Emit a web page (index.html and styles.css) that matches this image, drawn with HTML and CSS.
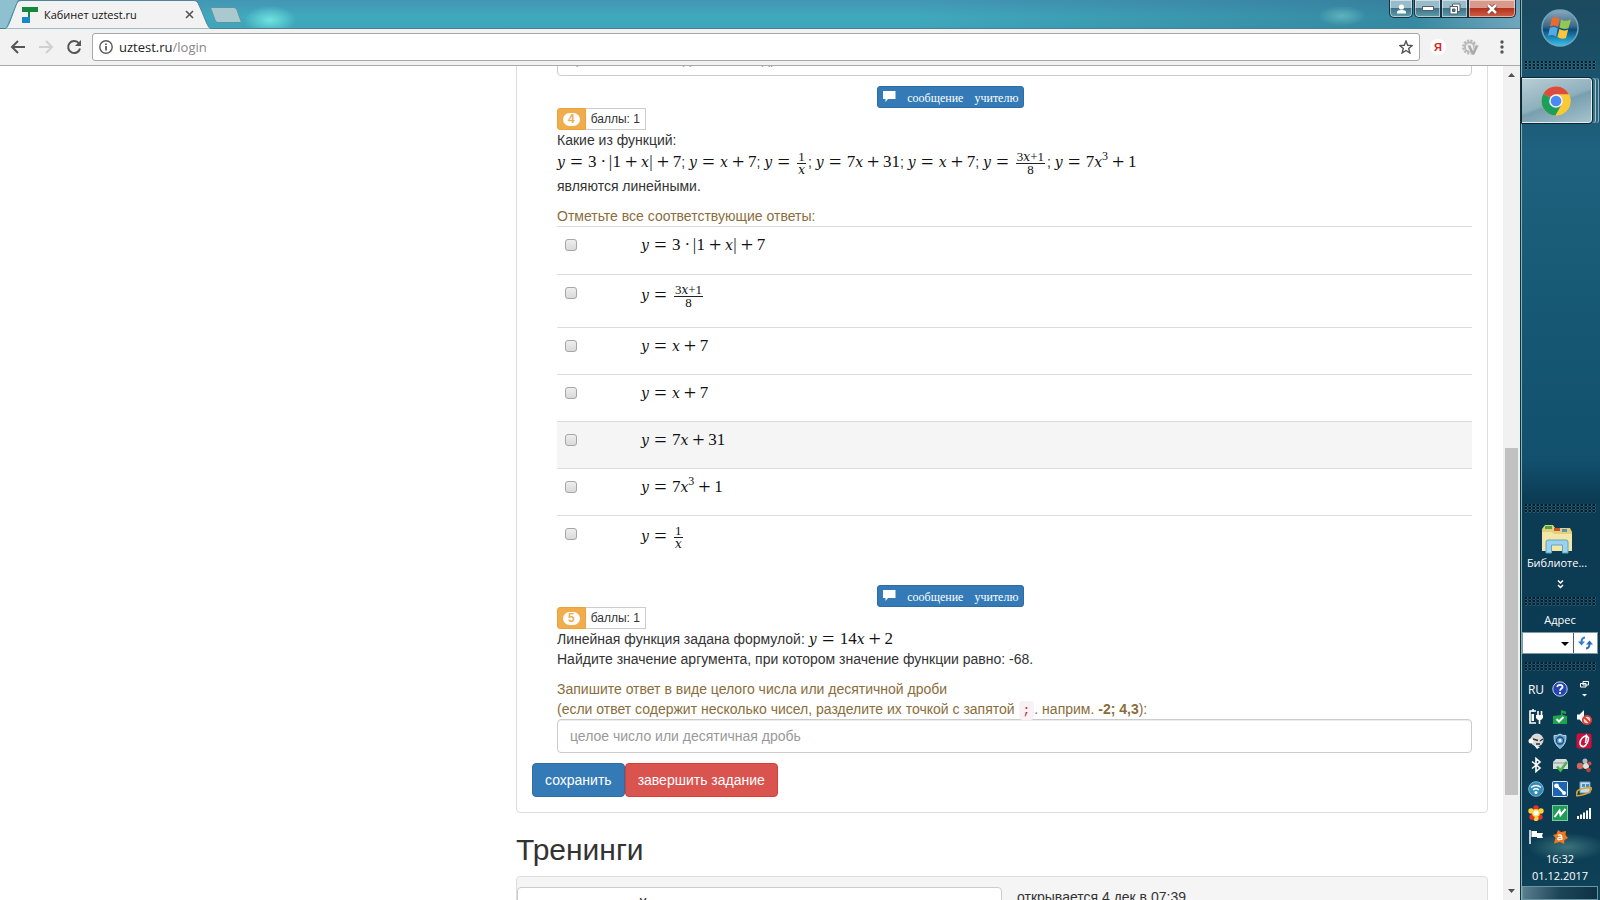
FILE: index.html
```html
<!DOCTYPE html>
<html lang="ru">
<head>
  <meta charset="UTF-8">
  <meta name="viewport" content="width=device-width, initial-scale=1.0">
  <title>Кабинет uztest.ru</title>
  <link rel="stylesheet" href="styles.css">
</head>
<body>
<div class="browser">
  <header class="titlebar">
    <div class="tab">
      <svg class="tab-shape" width="212" height="29" viewBox="0 0 212 29">
        <path d="M0 0H18L6 28H0Z" fill="#8fc0cf"/>
        <path d="M5 29C9 27 10 20 17 3Q18 .5 21 .5H194Q197 .5 198 3C206 20 207 27 211 29Z" fill="#f2f2f2" stroke="#4d8797"/>
      </svg>
      <svg class="favicon" width="16" height="16" viewBox="0 0 16 16">
        <path d="M0 0H16V5H8V16H0V10H6V5H0Z" fill="#14883f"/>
        <path d="M0 10H8V16H0Z" fill="#1689cb"/>
      </svg>
      <span class="tab-title">Кабинет uztest.ru</span>
      <button class="tab-close" aria-label="Закрыть вкладку">
        <svg width="9" height="9" viewBox="0 0 9 9"><path d="M1 1L8 8M8 1L1 8" stroke="#555" stroke-width="1.6"/></svg>
      </button>
    </div>
    <button class="new-tab" aria-label="Новая вкладка">
      <svg width="34" height="16" viewBox="0 0 34 16"><path d="M1.5 .5H25Q27 .5 28 3L32.5 15.5H9Q7 15.5 6 13Z" fill="#aac9ce" stroke="#5a95a3"/></svg>
    </button>
    <div class="window-buttons">
      <button class="win-btn win-user" aria-label="Пользователь">
        <svg width="11" height="10" viewBox="0 0 11 10"><circle cx="5.5" cy="3" r="2.6" fill="#fff"/><path d="M1 9.5V8Q1 6 5.5 6T10 8V9.5Z" fill="#fff"/></svg>
      </button>
      <button class="win-btn win-min" aria-label="Свернуть">
        <svg width="12" height="5" viewBox="0 0 12 5"><path d="M.5 .5H11.5V4.5H.5Z" fill="#fff" stroke="#52606b"/></svg>
      </button>
      <button class="win-btn win-restore" aria-label="Восстановить">
        <svg width="12" height="12" viewBox="0 0 12 12"><path d="M3.500 1H11V8.500H3.500Z" fill="#fff" stroke="#52606b"/><path d="M1 3.500H8.500V11H1Z" fill="#fff" stroke="#52606b"/><path d="M3.500 6H6V8.500H3.500Z" fill="#4b7b8e" stroke="#52606b"/></svg>
      </button>
      <button class="win-btn win-close" aria-label="Закрыть">
        <svg width="12" height="10" viewBox="0 0 12 10"><path d="M2 1L10 9M10 1L2 9" stroke="#6b2c2a" stroke-width="4"/><path d="M2 1L10 9M10 1L2 9" stroke="#fff" stroke-width="2.6"/></svg>
      </button>
    </div>
  </header>

  <nav class="toolbar">
    <button class="nav-btn" aria-label="Назад">
      <svg width="16" height="16" viewBox="0 0 16 16"><path d="M15 8H2M8 2L2 8L8 14" fill="none" stroke="#555" stroke-width="2"/></svg>
    </button>
    <button class="nav-btn" aria-label="Вперёд">
      <svg width="16" height="16" viewBox="0 0 16 16"><path d="M1 8H14M8 2L14 8L8 14" fill="none" stroke="#d0d0d0" stroke-width="2"/></svg>
    </button>
    <button class="nav-btn" aria-label="Обновить">
      <svg width="16" height="16" viewBox="0 0 16 16"><path d="M13 4.5A6 6 0 1 0 14 9.5" fill="none" stroke="#555" stroke-width="2"/><path d="M15 1V7H9Z" fill="#555"/></svg>
    </button>
    <form class="omnibox">
      <svg width="14" height="14" viewBox="0 0 14 14"><circle cx="7" cy="7" r="6.2" fill="none" stroke="#5a5a5a" stroke-width="1.4"/><path d="M7 6V10.5M7 3.5V5" stroke="#5a5a5a" stroke-width="1.8"/></svg>
      <label class="host" for="url">uztest.ru</label>
      <input class="url" id="url" type="text" value="/login">
      <svg width="14" height="14" viewBox="0 0 14 14"><path d="M7 1L8.7 5.3L13.2 5.6L9.7 8.5L10.9 13L7 10.5L3.1 13L4.3 8.5L.8 5.6L5.3 5.3Z" fill="none" stroke="#555" stroke-width="1.4"/></svg>
    </form>
    <button class="ext ext-ya" aria-label="Яндекс">Я</button>
    <button class="ext ext-gear" aria-label="Расширение">
      <svg width="17" height="17" viewBox="0 0 17 17"><circle cx="7.5" cy="8" r="6.3" fill="none" stroke="#b9b9b9" stroke-width="2.4" stroke-dasharray="2.2 1.1"/><circle cx="7.5" cy="8" r="4.6" fill="none" stroke="#b9b9b9" stroke-width="2"/><path d="M5 6H8.5L11 11.5L13.5 6H17L12.5 16H9.5Z" fill="#a9a9a9" stroke="#f2f2f2" stroke-width=".7"/></svg>
    </button>
    <button class="ext ext-menu" aria-label="Меню">
      <svg width="4" height="14" viewBox="0 0 4 14"><circle cx="2" cy="2" r="1.7" fill="#555"/><circle cx="2" cy="7" r="1.7" fill="#555"/><circle cx="2" cy="12" r="1.7" fill="#555"/></svg>
    </button>
  </nav>

  <div class="viewport">
    <div class="page">
      <main class="content">
        <section class="panel">
          <div class="question">
            <input class="answer" type="text" placeholder="целое число или десятичная дробь" aria-label="Ответ на задание 3">
          </div>

          <div class="question">
            <button class="message">
              <svg width="13" height="11" viewBox="0 0 13 11"><path d="M0 0H12.5V8H5L2.5 11V8H0Z" fill="#fff"/></svg>
              <span>сообщение</span><span>учителю</span>
            </button>
            <div class="score"><span class="num"><b>4</b></span><span class="points">баллы: 1</span></div>
            <p>Какие из функций:</p>
            <p class="formulas"><span class="math"><i>y</i><span class="rel">=</span>3<span class="dot">·</span><span class="bar">|</span>1<span class="bin">+</span><i>x</i><span class="bar">|</span><span class="bin">+</span>7</span>; <span class="math"><i>y</i><span class="rel">=</span><i>x</i><span class="bin">+</span>7</span>; <span class="math"><i>y</i><span class="rel">=</span><span class="frac"><span>1</span><span><i>x</i></span></span></span>; <span class="math"><i>y</i><span class="rel">=</span>7<i>x</i><span class="bin">+</span>31</span>; <span class="math"><i>y</i><span class="rel">=</span><i>x</i><span class="bin">+</span>7</span>; <span class="math"><i>y</i><span class="rel">=</span><span class="frac"><span>3<i>x</i>+1</span><span>8</span></span></span>; <span class="math"><i>y</i><span class="rel">=</span>7<i>x</i><sup>3</sup><span class="bin">+</span>1</span></p>
            <p>являются линейными.</p>
            <p class="hint">Отметьте все соответствующие ответы:</p>
            <table class="options">
              <tr>
                <td class="pick"><input type="checkbox" id="a1"></td>
                <td><label for="a1" class="math tall"><i>y</i><span class="rel">=</span>3<span class="dot">·</span><span class="bar">|</span>1<span class="bin">+</span><i>x</i><span class="bar">|</span><span class="bin">+</span>7</label></td>
              </tr>
              <tr>
                <td class="pick"><input type="checkbox" id="a2"></td>
                <td><label for="a2" class="math with-frac"><i>y</i><span class="rel">=</span><span class="frac"><span>3<i>x</i>+1</span><span>8</span></span></label></td>
              </tr>
              <tr>
                <td class="pick"><input type="checkbox" id="a3"></td>
                <td><label for="a3" class="math"><i>y</i><span class="rel">=</span><i>x</i><span class="bin">+</span>7</label></td>
              </tr>
              <tr>
                <td class="pick"><input type="checkbox" id="a4"></td>
                <td><label for="a4" class="math"><i>y</i><span class="rel">=</span><i>x</i><span class="bin">+</span>7</label></td>
              </tr>
              <tr class="active">
                <td class="pick"><input type="checkbox" id="a5"></td>
                <td><label for="a5" class="math"><i>y</i><span class="rel">=</span>7<i>x</i><span class="bin">+</span>31</label></td>
              </tr>
              <tr>
                <td class="pick"><input type="checkbox" id="a6"></td>
                <td><label for="a6" class="math"><i>y</i><span class="rel">=</span>7<i>x</i><sup>3</sup><span class="bin">+</span>1</label></td>
              </tr>
              <tr>
                <td class="pick"><input type="checkbox" id="a7"></td>
                <td><label for="a7" class="math with-frac"><i>y</i><span class="rel">=</span><span class="frac"><span>1</span><span><i>x</i></span></span></label></td>
              </tr>
            </table>
          </div>

          <div class="question">
            <button class="message">
              <svg width="13" height="11" viewBox="0 0 13 11"><path d="M0 0H12.5V8H5L2.5 11V8H0Z" fill="#fff"/></svg>
              <span>сообщение</span><span>учителю</span>
            </button>
            <div class="score"><span class="num"><b>5</b></span><span class="points">баллы: 1</span></div>
            <p>Линейная функция задана формулой: <span class="math"><i>y</i><span class="rel">=</span>14<i>x</i><span class="bin">+</span>2</span></p>
            <p>Найдите значение аргумента, при котором значение функции равно: -68.</p>
            <label class="hint" for="q5">Запишите ответ в виде целого числа или десятичной дроби<br>(если ответ содержит несколько чисел, разделите их точкой с запятой <code>;</code>. наприм. <b>-2; 4,3</b>):</label>
            <input class="answer" id="q5" type="text" placeholder="целое число или десятичная дробь">
          </div>

          <div class="actions">
            <button class="btn btn-primary">сохранить</button><button class="btn btn-danger">завершить задание</button>
          </div>
        </section>

        <h2>Тренинги</h2>
        <section class="trainings">
          <div class="training-name">й</div>
          <div class="training-date">открывается 4 дек в 07:39</div>
        </section>
      </main>
    </div>
    <div class="scrollbar">
      <svg width="7" height="4" viewBox="0 0 7 4"><path d="M0 4L3.5 0L7 4Z" fill="#505050"/></svg>
      <div class="track"><div class="thumb"></div></div>
      <svg width="7" height="4" viewBox="0 0 7 4"><path d="M0 0L3.5 4L7 0Z" fill="#505050"/></svg>
    </div>
  </div>
</div>

<aside class="taskbar">
  <button class="start" aria-label="Пуск">
    <svg width="40" height="40" viewBox="0 0 40 40">
      <defs>
        <linearGradient id="orb" x1="0" y1="0" x2="0" y2="1"><stop offset="0" stop-color="#8aa9bd"/><stop offset=".45" stop-color="#3f6987"/><stop offset=".55" stop-color="#0b4a7c"/><stop offset="1" stop-color="#35c4f0"/></linearGradient>
      </defs>
      <circle cx="20" cy="20" r="18" fill="url(#orb)" stroke="#6fa5bd" stroke-width="1.5"/>
      <path d="M12 10Q16 8 19.5 11L18 19Q14 16.5 10 18.5Z" fill="#ee6a2c"/>
      <path d="M21 11.5Q25 14 31 11.5L28.5 20Q24 22 19.5 19.5Z" fill="#93c952"/>
      <path d="M9.8 20Q14 18 17.8 20.5L16 28.5Q12 26 8 28Z" fill="#57a9e6"/>
      <path d="M19.3 21Q23.5 23.5 28.2 21.5L26 30Q21.5 32 17.5 29Z" fill="#fbc637"/>
    </svg>
  </button>
  <div class="grip"></div>
  <button class="task-chrome" aria-label="Google Chrome">
    <svg width="30" height="30" viewBox="0 0 30 30">
      <circle cx="15" cy="15" r="14.5" fill="#fbc935"/>
      <path d="M15 15L2.44 7.75A14.5 14.5 0 0 1 28 8.5H15Z" fill="#dd4b3e"/>
      <path d="M15 15L2.44 7.75A14.5 14.5 0 0 0 14.5 29.5L21 18.5Z" fill="#1d9f5b"/>
      <path d="M15 8.5H28A14.5 14.5 0 0 1 14.5 29.5L21 18Z" fill="#fbc935"/>
      <circle cx="15" cy="15" r="6.8" fill="#f3f3f3"/><circle cx="15" cy="15" r="5.3" fill="#4a8af4"/>
    </svg>
  </button>
  <div class="spacer"></div>
  <div class="grip"></div>
  <button class="library">
    <svg width="34" height="30" viewBox="0 0 34 30">
      <path d="M2 5L5 1H13L15 4H30L32 8V27H2Z" fill="#e4cf7c"/>
      <path d="M5 2H12V5H5Z" fill="#4fa83d"/><path d="M14 4H20V7H14Z" fill="#c7502d"/><path d="M22 5H27V8H22Z" fill="#5794b8"/>
      <path d="M2 8H12L14 10H32V27H2Z" fill="#f3e6a6"/>
      <path d="M6 18Q6 16 8 16H26Q28 16 28 18V29H22.5V21H11.5V29H6Z" fill="#9dd2ec" stroke="#5ba6cb"/>
    </svg>
    <span>Библиоте...</span>
  </button>
  <button class="more" aria-label="Ещё">
    <svg width="7" height="9" viewBox="0 0 7 9"><path d="M1 .5L3.5 3L6 .5M1 5L3.5 7.5L6 5" fill="none" stroke="#fff" stroke-width="1.5"/></svg>
  </button>
  <div class="grip"></div>
  <label class="address-label" for="address">Адрес</label>
  <div class="address">
    <select id="address"><option></option></select>
    <svg class="caret" width="8" height="4" viewBox="0 0 8 4"><path d="M0 0H8L4 4Z" fill="#000"/></svg>
    <button aria-label="Переход">
      <svg width="15" height="14" viewBox="0 0 15 14"><path d="M7 1.5Q3.500 2 3.500 6" fill="none" stroke="#2f7fd0" stroke-width="2"/><path d="M0 5.500H7L3.500 9.500Z" fill="#2f7fd0"/><path d="M8 12.500Q11.500 12 11.500 8" fill="none" stroke="#2f6ab8" stroke-width="2"/><path d="M8 8.500H15L11.500 4.500Z" fill="#2f6ab8"/></svg>
    </button>
  </div>
  <div class="grip"></div>
  <div class="lang">
    <span>RU</span>
    <svg width="16" height="16" viewBox="0 0 16 16"><circle cx="8" cy="8" r="7.2" fill="#2445b4" stroke="#c3d0ef"/><path d="M5.3 6Q5.5 3.8 8 3.8T10.6 6C10.6 7.6 8 7.6 8 9.8M8 11V13" fill="none" stroke="#fff" stroke-width="1.7"/></svg>
    <svg width="9" height="18" viewBox="0 0 9 18"><path d="M3 1.5H8.5V5H3ZM.5 3.5H6V7H.5Z" fill="#0c3c53" stroke="#fff"/><path d="M2 14H7L4.5 16.5Z" fill="#fff"/></svg>
  </div>
  <div class="tray">
    <svg viewBox="0 0 16 16"><path d="M8 2H2V14H8M5 0V3M10 2V6M13.5 2V6" fill="none" stroke="#fff" stroke-width="1.6"/><path d="M8 6H15V9L13 11H10L8 9ZM10.7 10H12.3V15H10.7ZM3.5 5H6V12H3.5Z" fill="#fff"/></svg>
    <svg viewBox="0 0 16 16"><path d="M1 7L9 6V1L14 2.5V5L10.5 4V6L15 7V15H1Z" fill="#1ca64c"/><path d="M4.5 10L7 12.5L11.5 8" fill="none" stroke="#fff" stroke-width="2"/></svg>
    <svg viewBox="0 0 16 16"><path d="M1 5.5H3.5L8 1V15L3.5 10.5H1Z" fill="#fff"/><circle cx="11" cy="11" r="4.2" fill="#f6d9d5" stroke="#d93b2f" stroke-width="1.8"/><path d="M8 8L14 14" stroke="#d93b2f" stroke-width="1.8"/></svg>
    <svg viewBox="0 0 16 16"><circle cx="9" cy="7" r="6.5" fill="#d9d9d9"/><circle cx="3" cy="8" r="2.5" fill="#fff"/><path d="M5 6L10 7.5M15 6L12 8M8 11H12" stroke="#333" stroke-width="1.4"/><path d="M6 12L12 14L9 16Z" fill="#fff"/></svg>
    <svg viewBox="0 0 16 16"><path d="M8 1Q11 3 14 2.5Q14.5 11 8 15.5Q1.5 11 2 2.5Q5 3 8 1Z" fill="#68a5cf" stroke="#b9d6e9"/><circle cx="8" cy="7.5" r="3.5" fill="none" stroke="#174b7a" stroke-width="1.3"/><circle cx="8" cy="7.5" r="1.4" fill="#e3f2fc"/></svg>
    <svg viewBox="0 0 16 16"><rect x=".5" y=".5" width="15" height="15" rx="2" fill="#c9113c"/><path d="M10.5 2.5Q3.5 5 4 11Q5 14 8 13.5Q12 11 12.5 5L10.5 2.5L9.5 10" fill="none" stroke="#fff" stroke-width="1.6"/></svg>
    <svg viewBox="0 0 16 16"><path d="M4 4.5L12 11L8 14.5V1.5L12 5L4 11.5" fill="none" stroke="#fff" stroke-width="1.6"/></svg>
    <svg viewBox="0 0 16 16"><path d="M1 5L4 2H14L16 5V12H1Z" fill="#d7dddc"/><path d="M1 6H15" stroke="#89999a"/><path d="M5 9.5L8.5 13.5L15 5" fill="none" stroke="#4bb649" stroke-width="2.6"/></svg>
    <svg viewBox="0 0 16 16"><circle cx="9" cy="4" r="2.5" fill="#b8b8b8"/><circle cx="4" cy="9" r="3.2" fill="#d46857"/><circle cx="10" cy="9" r="3" fill="#e0e0e0"/><circle cx="13.5" cy="6.5" r="2" fill="#ca5140"/><circle cx="12.5" cy="13" r="2.3" fill="#b34738"/></svg>
    <svg viewBox="0 0 16 16"><circle cx="8" cy="8" r="7.3" fill="#318ab5" stroke="#79bfdc"/><path d="M3 6.5Q8 2.5 13 6.5M5 9Q8 6.5 11 9" fill="none" stroke="#fff" stroke-width="1.5"/><circle cx="8" cy="11.5" r="1.6" fill="#fff"/></svg>
    <svg viewBox="0 0 16 16"><rect x=".5" y=".5" width="15" height="15" rx="1" fill="#1d65b3" stroke="#dceaf7"/><path d="M4.500 4.500L12 12" stroke="#fff" stroke-width="2.2"/><circle cx="4.5" cy="4.8" r="2.4" fill="#fff"/><circle cx="12" cy="12" r="2" fill="#fff"/></svg>
    <svg viewBox="0 0 16 16"><path d="M4 1H14V12H4Z" fill="#c2ddef" stroke="#6d9cbc"/><path d="M6 3H9V6H6ZM10 3H13V6H10Z" fill="#478ec4"/><path d="M1 12Q0 9 7 7.5T15.5 7Q15 12 6 14T1 12Z" fill="none" stroke="#e0a32e" stroke-width="1.7"/></svg>
    <svg viewBox="0 0 16 16"><circle cx="8" cy="3" r="2.7" fill="#e6332a"/><circle cx="13" cy="6" r="2.7" fill="#ffd43b"/><circle cx="12" cy="12" r="2.7" fill="#e6332a"/><circle cx="8" cy="13.5" r="2.6" fill="#ffd43b"/><circle cx="4" cy="12" r="2.7" fill="#e6332a"/><circle cx="3" cy="6" r="2.7" fill="#ffd43b"/><circle cx="8" cy="8" r="4" fill="#ffd43b"/><circle cx="8" cy="8" r="2.6" fill="#fff"/></svg>
    <svg viewBox="0 0 16 16"><rect x=".5" y=".5" width="15" height="15" fill="#1e9c57" stroke="#7ccb9e"/><path d="M2.5 12L7.5 5.5L8.5 10L13.5 4" fill="none" stroke="#fff" stroke-width="2"/></svg>
    <svg viewBox="0 0 16 16"><path d="M1 11H3V14H1ZM4 9.500H6V14H4ZM7 7.500H9V14H7ZM10 5.500H12V14H10ZM13 3H15V14H13Z" fill="#fff"/></svg>
    <svg viewBox="0 0 16 16"><path d="M2 1V15" stroke="#fff" stroke-width="1.5"/><path d="M3.5 2H9V4H15L14 6.5L15 9H9V8H3.5Z" fill="#fff"/></svg>
    <svg viewBox="0 0 16 16"><path d="M6 1L9 3L14 2L13.5 6L16 9L12.5 11L12 15L8 13L2 14.5L3.5 9L1 6L4.5 5Z" fill="#f0771c"/><path d="M5.8 6.3Q9.8 5 9.8 8V11M9.500 8.300Q5.800 8 5.800 9.800T9.500 10" fill="none" stroke="#fff" stroke-width="1.3"/></svg>
  </div>
  <time class="clock">16:32<br>01.12.2017</time>
  <button class="show-desktop" aria-label="Свернуть все окна"></button>
</aside>
</body>
</html>
```
FILE: styles.css
```css
* {
  box-sizing: border-box;
}

body {
  margin: 0;
  height: 100vh;
  display: flex;
  overflow: hidden;
  font-family: "Liberation Sans", Arial, sans-serif;
  font-size: 14px;
  line-height: 20px;
  color: #333;
  background-color: #fff;
}

button, input, select {
  font-family: inherit;
  font-size: inherit;
  margin: 0;
}

button {
  padding: 0;
  border: none;
  background: none;
  cursor: pointer;
}

svg {
  display: block;
  flex: none;
}

p {
  margin: 0;
}

/* browser window */
.browser {
  flex: 1;
  min-width: 0;
  display: flex;
  flex-direction: column;
  border-right: 1px solid #12313d;
}

.titlebar {
  height: 29px;
  flex: none;
  display: flex;
  align-items: flex-start;
  background:
    radial-gradient(ellipse 26px 14px at 270px 20px, #6fe3e0, transparent),
    radial-gradient(ellipse 24px 10px at 1342px 16px, #5fb3bd, transparent),
    linear-gradient(to right, transparent 60%, rgba(40, 100, 130, 0.45) 93%, rgba(160, 165, 190, 0.5)),
    linear-gradient(#4396b4, #40a9bd 60%, #3fa5b9);
  border-bottom: 1px solid #50808e;
}

.tab {
  position: relative;
  width: 212px;
  height: 29px;
  display: flex;
  align-items: center;
  gap: 6px;
  padding: 0 18px 0 22px;
}

.tab-shape {
  position: absolute;
  left: 0;
  top: 0;
}

.favicon, .tab-title, .tab-close {
  position: relative;
}

.tab-title {
  flex: 1;
  font-family: "Open Sans", "Noto Sans", sans-serif;
  font-size: 11px;
  color: #111;
  white-space: nowrap;
}

.new-tab {
  margin-top: 7px;
  margin-left: -3px;
}

.window-buttons {
  margin-left: auto;
  margin-right: 4px;
  display: flex;
}

.win-btn {
  height: 18px;
  width: 27px;
  display: flex;
  align-items: center;
  justify-content: center;
  border: 1px solid #17313e;
  border-top: none;
  box-shadow: inset 0 0 0 1px rgba(255, 255, 255, 0.5);
  background: linear-gradient(#98bcc9 45%, #3f7389 50%, #5e9cab);
}

.win-user {
  width: 24px;
  margin-right: 1px;
  border-radius: 0 0 5px 5px;
}

.win-min {
  border-radius: 0 0 0 5px;
}

.win-close {
  width: 48px;
  border-radius: 0 0 5px 0;
  background: linear-gradient(#d99a8d 45%, #b4331f 50%, #cf5f45);
}

.toolbar {
  height: 37px;
  flex: none;
  display: flex;
  align-items: center;
  padding-right: 10px;
  padding-left: 4px;
  background-color: #f2f2f2;
  border-bottom: 1px solid #aaa;
}

.nav-btn {
  width: 28px;
  height: 28px;
  display: flex;
  align-items: center;
  justify-content: center;
}

.omnibox {
  flex: 1;
  min-width: 0;
  height: 28px;
  margin: 0 10px 0 4px;
  padding: 0 6px;
  display: flex;
  align-items: center;
  background-color: #fff;
  border: 1px solid #a8a8a8;
  border-radius: 3px;
  font-family: "Open Sans", "Noto Sans", sans-serif;
  font-size: 13px;
}

.host {
  margin-left: 6px;
  color: #222;
}

.url {
  flex: 1;
  min-width: 0;
  padding: 0;
  border: none;
  outline: none;
  color: #888;
}

.ext {
  width: 16px;
  height: 16px;
  margin-right: 16px;
  display: flex;
  align-items: center;
  justify-content: center;
}

.ext-ya {
  border-radius: 50%;
  background-color: #fff;
  color: #d7261e;
  font-size: 11px;
  font-weight: bold;
}

.ext-menu {
  margin-right: 0;
}

.viewport {
  flex: 1;
  min-height: 0;
  display: flex;
  overflow: hidden;
}

.scrollbar {
  width: 17px;
  padding: 7px 0;
  display: flex;
  flex-direction: column;
  align-items: center;
  background-color: #f1f1f1;
}

.track {
  flex: 1;
  width: 13px;
  display: flex;
  flex-direction: column;
  justify-content: flex-end;
  padding-bottom: 94px;
}

.thumb {
  height: 347px;
  background-color: #c1c1c1;
}

/* page */
.page {
  flex: 1;
  min-width: 0;
  display: grid;
  grid-template-columns: 1fr 2fr;
}

.content {
  grid-column: 2;
  min-width: 0;
  margin-top: -40px;
  padding: 0 15px;
}

.panel {
  padding: 15px;
  border: 1px solid #ddd;
  border-radius: 4px;
}

.question {
  padding-left: 25px;
  margin-bottom: 10px;
}

.answer {
  display: block;
  width: 100%;
  height: 34px;
  padding: 6px 12px;
  border: 1px solid #ccc;
  border-radius: 4px;
  box-shadow: inset 0 1px 1px rgba(0, 0, 0, 0.075);
  color: #555;
}

.answer::placeholder {
  color: #999;
}

.message {
  display: flex;
  gap: 11px;
  height: 22px;
  margin-left: 35%;
  padding: 2px 5px 0;
  align-items: center;
  border: 1px solid #2e6da4;
  border-radius: 3px;
  background-color: #337ab7;
  color: #fff;
  font-family: "Liberation Serif", "Times New Roman", serif;
  font-size: 12px;
}

.message svg {
  margin-bottom: 3px;
}

.score {
  display: flex;
  height: 22px;
  font-size: 12px;
  line-height: 20px;
}

.num {
  padding: 4px 5px;
  background-color: #f0ad4e;
  border: 1px solid #eea236;
  border-radius: 3px 0 0 3px;
}

.num b {
  display: block;
  padding: 0 5px;
  line-height: 13px;
  border-radius: 8px;
  background-color: #fff;
  color: #f0ad4e;
}

.points {
  padding: 0 5px;
  border: 1px solid #ccc;
  border-left: none;
}

.math {
  font-family: "Liberation Serif", "Times New Roman", serif;
  font-size: 17px;
  color: #111;
  white-space: nowrap;
}

.math i {
  font-family: "DejaVu Serif", serif;
  font-size: 14px;
}

.formulas {
  height: 26px;
}

.rel, .bin, .dot, .bar {
  display: inline-block;
  text-align: center;
}

.rel, .bin {
  width: 12px;
  margin: 0 4px;
  font-size: 22px;
  line-height: 14px;
  vertical-align: -2px;
}

.rel {
  width: 13px;
  margin: 0 5px;
}

.dot {
  width: 4px;
  margin: 0 4px;
}

.bar {
  width: 4px;
}

.math sup {
  font-size: 12px;
  line-height: 0;
}

.frac {
  display: inline-flex;
  flex-direction: column;
  margin: 0 2px;
  vertical-align: middle;
  text-align: center;
  font-size: 13px;
  line-height: 13px;
}

.frac span {
  padding: 0 1px;
}

.frac span + span {
  border-top: 1px solid #222;
  line-height: 12px;
}

.frac i {
  font-size: 12px;
  line-height: 12px;
}

.hint {
  display: block;
  margin-top: 10px;
  color: #8a6d3b;
}

.hint code {
  padding: 2px 4px;
  font-family: "Liberation Mono", monospace;
  font-size: 13px;
  line-height: 16px;
  color: #c7254e;
  background-color: #f9f2f4;
  border-radius: 4px;
}

.options {
  width: 100%;
  margin-bottom: 16px;
  border-collapse: collapse;
}

.options td {
  padding: 8px 8px 18px;
  vertical-align: top;
  border-top: 1px solid #ddd;
}

.options .pick {
  width: 76px;
}

.options label {
  display: block;
  height: 20px;
}

.options .tall {
  height: 21px;
}

.options .with-frac {
  height: 26px;
}

.options tr:last-child .with-frac {
  height: 27px;
}

.options .active {
  background-color: #f5f5f5;
}

.pick input {
  appearance: none;
  display: block;
  width: 12px;
  height: 12px;
  margin-top: 4px;
  border: 1px solid #a6a6a6;
  border-radius: 3px;
  background: linear-gradient(#eee, #d9d9d9);
}

.actions {
  display: flex;
}

.btn {
  height: 34px;
  padding: 6px 12px;
  border: 1px solid #2e6da4;
  border-radius: 4px;
  color: #fff;
  white-space: nowrap;
}

.btn-primary {
  background-color: #337ab7;
}

.btn-danger {
  background-color: #d9534f;
  border-color: #d43f3a;
}

h2 {
  margin: 20px 0 10px;
  font-size: 30px;
  font-weight: normal;
  line-height: 33px;
}

.trainings {
  display: grid;
  grid-template-columns: 1fr 1fr;
  padding-top: 10px;
  border: 1px solid #ddd;
  border-radius: 4px;
  background-color: #f5f5f5;
}

.training-name {
  padding: 8px 15px 10px 120px;
  font-size: 18px;
  border: 1px solid #ccc;
  border-radius: 4px;
  background-color: #fff;
}

.training-date {
  padding: 0 15px;
}

/* taskbar */
.taskbar {
  width: 79px;
  flex: none;
  display: flex;
  flex-direction: column;
  align-items: center;
  padding-right: 2px;
  border-left: 1px solid #7fb3bd;
  background:
    radial-gradient(ellipse 40px 14px at 45px 847px, rgba(90, 150, 150, 0.6), transparent),
    linear-gradient(#1c4a5f 0, #1a5068 60px, #1e627f 150px, #155772 340px, #12506e 460px, #0c3b54 500px, #0b3a52 830px, #0e4459);
  color: #fff;
  font-family: "Open Sans", "Noto Sans", sans-serif;
  font-size: 11px;
  line-height: 17px;
}

.start {
  margin: 8px 0 13px;
}

.grip {
  width: 71px;
  height: 9px;
  flex: none;
  background-image: radial-gradient(circle at 1px 1px, #041d2b 1px, #4c8193 1px, transparent 2px);
  background-size: 4px 3px;
}

.task-chrome {
  align-self: flex-start;
  width: 70px;
  height: 45px;
  margin-top: 8px;
  padding-left: 19px;
  border: 1px solid #e2eef2;
  border-left: none;
  border-radius: 0 3px 3px 0;
  outline: 1px solid #0a2733;
  background: linear-gradient(160deg, #b9cdd5, #8eb0bd 50%, #799fae 55%, #a5c3cd);
  box-shadow: 3px 0 0 #3a7288, 4px 0 0 #a6c5cf, 6px 0 0 #2d6478, 7px 0 0 #8db1bd;
}

.spacer {
  flex: 1;
}

.library {
  margin-top: 11px;
  margin-right: 6px;
  color: #fff;
  line-height: 17px;
}

.library svg {
  margin: 0 auto;
}

.more {
  margin: 9px 0 8px;
}

.address-label {
  margin: 5px 0 4px;
}

.address {
  position: relative;
  align-self: stretch;
  height: 22px;
  display: flex;
  border: 1px solid #7d98a4;
  background-color: #fff;
  margin-bottom: 8px;
}

.address select {
  appearance: none;
  width: 51px;
  border: none;
  border-right: 1px solid #48616c;
  background-color: #fff;
}

.address .caret {
  position: absolute;
  left: 38px;
  top: 9px;
  pointer-events: none;
}

.address button {
  flex: 1;
  display: flex;
  align-items: center;
  justify-content: center;
}

.lang, .tray {
  display: grid;
  grid-template-columns: repeat(3, 24px);
  justify-items: center;
  align-items: center;
}

.lang {
  margin-top: 8px;
  height: 20px;
  font-size: 12px;
}

.tray {
  margin-top: 6px;
  grid-auto-rows: 24px;
}

.tray svg {
  width: 16px;
  height: 16px;
}

.clock {
  margin: 1px 0 2px;
  text-align: center;
}

.show-desktop {
  align-self: stretch;
  height: 14px;
  flex: none;
  border: 1px solid #6a94a2;
  background: linear-gradient(100deg, #5b7f90, #1d4558 50%, #0c3145);
}
```
